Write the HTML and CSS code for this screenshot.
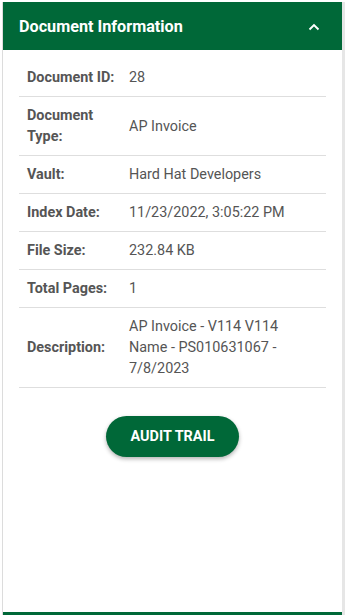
FILE: index.html
```html
<!DOCTYPE html>
<html lang="en">
<head>
<meta charset="utf-8">
<title>Document Information</title>
<link rel="stylesheet" href="styles.css">
</head>
<body>
<div class="page">
  <section class="panel">
    <header class="panel-header">
      <h2 class="panel-title">Document Information</h2>
      <svg class="chevron" viewBox="0 0 12 8" width="12" height="8" aria-hidden="true">
        <polyline points="1.5,6.5 6,2 10.5,6.5" fill="none" stroke="#ffffff" stroke-width="1.9"/>
      </svg>
    </header>
    <div class="panel-body">
      <div class="info-table">
        <div class="row"><div class="label">Document ID:</div><div class="value">28</div></div>
        <div class="row"><div class="label">Document Type:</div><div class="value">AP Invoice</div></div>
        <div class="row"><div class="label">Vault:</div><div class="value">Hard Hat Developers</div></div>
        <div class="row"><div class="label">Index Date:</div><div class="value">11/23/2022, 3:05:22 PM</div></div>
        <div class="row"><div class="label">File Size:</div><div class="value">232.84 KB</div></div>
        <div class="row"><div class="label">Total Pages:</div><div class="value">1</div></div>
        <div class="row"><div class="label">Description:</div><div class="value">AP Invoice - V114 V114 Name - PS010631067 - 7/8/2023</div></div>
      </div>
      <div class="actions">
        <button class="btn-audit" type="button">AUDIT TRAIL</button>
      </div>
    </div>
  </section>
  <section class="panel next">
    <header class="panel-header"></header>
  </section>
</div>
</body>
</html>
```

FILE: styles.css
```css
html, body {
  margin: 0;
  padding: 0;
  background: #ffffff;
}

body {
  font-family: Roboto, "Liberation Sans", Arial, sans-serif;
  color: #555555;
  font-size: 14.4px;
}

.page {
  padding: 2px 0 0 2px;
  height: 615px;
  box-sizing: border-box;
  overflow: hidden;
}

.panel {
  border-left: 1px solid #dcdcdc;
  border-right: 3px solid #e6e6e6;
}

.panel-header {
  background: #006838;
  height: 48px;
  display: flex;
  align-items: center;
  justify-content: space-between;
  padding: 0 20px 0 16px;
}

.panel-title {
  margin: 0;
  color: #ffffff;
  font-size: 16.2px;
  font-weight: 700;
  letter-spacing: 0;
}

.chevron {
  display: block;
  margin-top: 1px;
  margin-right: 2px;
}

.panel-body {
  height: 562px;
  box-sizing: border-box;
  padding: 9px 16px 0 16px;
}

.info-table {
  display: flex;
  flex-direction: column;
}

.row {
  display: grid;
  grid-template-columns: 110px 1fr;
  border-bottom: 1px solid #dedede;
  padding: 8px 0;
  align-items: center;
  line-height: 21px;
}

.label {
  padding: 0 8px;
  font-weight: 700;
  color: #555555;
}

.value {
  padding: 0 12px 0 0;
  color: #555555;
}

.actions {
  display: flex;
  justify-content: center;
  padding-top: 28px;
}

.btn-audit {
  background: #006838;
  color: #ffffff;
  border: none;
  border-radius: 21px;
  width: 133px;
  height: 41px;
  font-family: Roboto, "Liberation Sans", Arial, sans-serif;
  font-size: 14.4px;
  font-weight: 700;
  letter-spacing: 0;
  box-shadow: 0 2px 4px rgba(0, 0, 0, 0.3);
}

.panel.next .panel-header {
  height: 48px;
}
```
